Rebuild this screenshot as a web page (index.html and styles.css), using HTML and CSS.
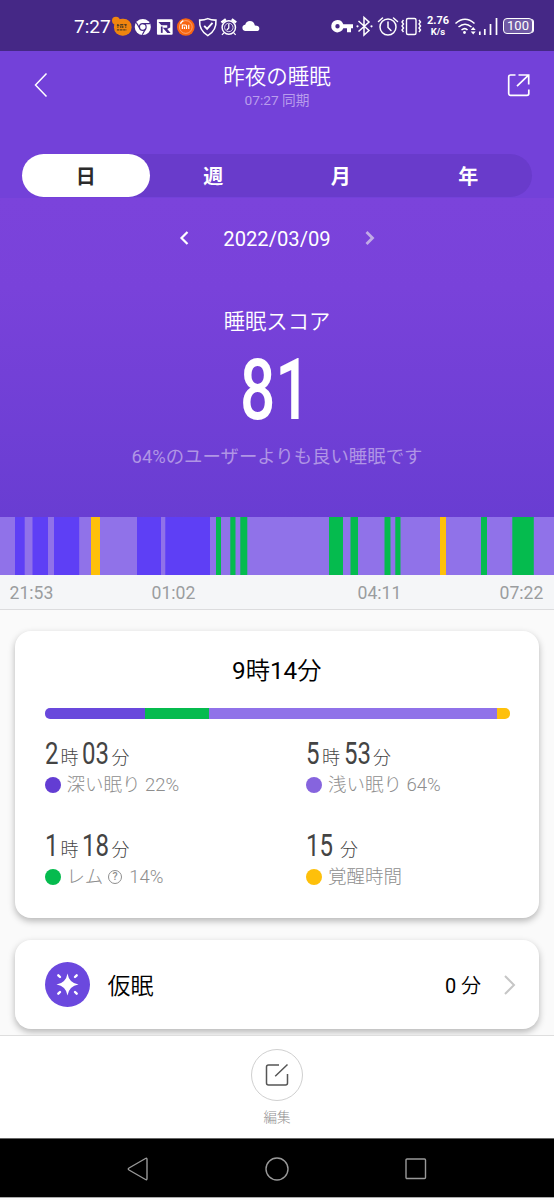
FILE: index.html
```html
<!DOCTYPE html>
<html lang="ja">
<head>
<meta charset="utf-8">
<title>昨夜の睡眠</title>
<link rel="stylesheet" href="styles.css">
</head>
<body>
<div class="phone">
  <div class="status">
    <span class="clock">7:27</span>
    <div class="notifs">
      <svg viewBox="0 0 22 24"><circle cx="5" cy="6.500" r="4" fill="#f0850f"/><rect x="3" y="4.500" width="18" height="17.500" rx="8.500" fill="#f0850f"/><path d="M6 11.500h3M7 10v4M10 10.500h2v3h-2zM13.500 10.500h3M15 10v4M6 16h10" stroke="#59401f" stroke-width="1.300" fill="none" stroke-dasharray="2.500 .7"/></svg>
      <svg viewBox="0 0 22 24"><circle cx="11" cy="13" r="8.200" fill="#fff"/><circle cx="11" cy="13" r="3.400" fill="#fff" stroke="#452886" stroke-width="1.200"/><path d="M11 9.600h7.300M8.100 14.700L4.300 8.500M13.900 14.700L10.500 21" stroke="#452886" stroke-width="1.200"/></svg>
      <svg viewBox="0 0 22 24"><rect x="3" y="5" width="16" height="16" rx="1" fill="#fff"/><path d="M4.500 7.800h12v5.800l-3 1.400 3.500 4.200h-3.400l-4.600-5.400h4.500v-2.600H7.500z" fill="#452886"/><path d="M7 12.500h1.800V19H7z" fill="#452886"/></svg>
      <svg viewBox="0 0 22 24"><circle cx="11" cy="13" r="9" fill="#f86510"/><circle cx="11" cy="13" r="6.500" fill="none" stroke="#ffb38a" stroke-width=".8"/><path d="M5.500 9.500a7 7 0 0 1 3-3" stroke="#fff" stroke-width="1.600" fill="none"/><path d="M7.500 15v-4h3.200q1 0 1 1v3M9.600 12.800V15M14 10.800V15" stroke="#fff" stroke-width="1.200" fill="none"/></svg>
      <svg viewBox="0 0 22 24"><path d="M11 4.500q4 1.700 8.300 1.500.8 10.500-8.300 15.800Q1.900 16.500 2.700 6 7 6.200 11 4.500z" fill="none" stroke="#fff" stroke-width="1.600"/><path d="M7.300 11.800l3 3.200 5.500-6.200" fill="none" stroke="#fff" stroke-width="1.900"/></svg>
      <svg viewBox="0 0 22 24"><g fill="none" stroke="#fff"><circle cx="11" cy="13.500" r="6.800" stroke-width="1.500"/><circle cx="11" cy="13.500" r="4.300" stroke-width=".8"/><path d="M11 10v4l-2 2M6 19l-2 2M16 19l2 2" stroke-width="1.300"/><path d="M3.500 8.500L8 5.200M14 5.200l4.500 3.300" stroke-width="2.600"/></g></svg>
      <svg viewBox="0 0 22 24"><path d="M5 17.200a3.300 3.300 0 0 1 .3-6.500Q6.500 7 10 7q4 0 5.200 4.500 4.500.1 4.500 3 0 2.700-3 2.700z" fill="#fff"/></svg>
    </div>
    <div class="system">
      <svg width="24" height="24" viewBox="330 13 24 24"><path fill="#fff" fill-rule="evenodd" d="M337.500 19a6.200 6.200 0 0 1 5.800 4.200H353v4h-2v4h-4v-4h-3.700a6.200 6.200 0 1 1-5.800-8.200zm0 4a2.200 2.200 0 1 0 0 4.400 2.200 2.200 0 0 0 0-4.400z"/></svg>
      <svg width="22" height="24" viewBox="354 13 22 24"><path d="M358.500 20l10.500 9.500-5 4.500V16.500l5 4.500-10.500 9.500" fill="none" stroke="#fff" stroke-width="1.500"/><circle cx="357.500" cy="25.300" r="1.100" fill="#fff"/><circle cx="371.500" cy="25.300" r="1.100" fill="#fff"/></svg>
      <svg width="24" height="24" viewBox="376 13 24 24"><g fill="none" stroke="#fff" stroke-width="1.500"><circle cx="388" cy="26" r="8"/><path d="M388 21v5.500l3 3M378.500 20.500l4-3.500M397.500 20.500l-4-3.500" stroke-linecap="round"/></g></svg>
      <svg width="24" height="24" viewBox="400 13 24 24"><g fill="none" stroke="#fff" stroke-width="1.400"><rect x="406.500" y="17.500" width="9.500" height="16" rx="1.500"/><path d="M403.500 19l-1.500 2 1.500 2-1.500 2 1.500 2-1.500 2 1.500 2M419 19l1.500 2-1.500 2 1.500 2-1.500 2 1.500 2-1.500 2"/></g></svg>
      <div class="speed"><b>2.76</b><b class="unit">K/s</b></div>
      <svg width="24" height="24" viewBox="454 13 24 24"><g fill="none" stroke="#fff" stroke-width="1.500"><path d="M455.500 22.500q9.500-8.500 19 0M458.500 26q6.500-5.500 13 0M461.500 29q3.500-2.800 6 0"/></g><circle cx="464.500" cy="31.500" r="1.400" fill="#fff"/><path d="M470.700 29h5l-2.500-3zM470.700 30.500h5l-2.500 3z" fill="#fff"/></svg>
      <svg width="22" height="24" viewBox="478 13 22 24"><path d="M479.800 30.500V34M484.800 28v6M490.500 23v11M496.500 17v17" stroke="#fff" stroke-width="1.700"/></svg>
      <div class="battery">100</div>
    </div>
  </div>

  <div class="hero">
    <div class="hero-top">
      <header class="titlebar">
        <svg width="40" height="40" viewBox="20 65 40 40"><path d="M46.500 73.500L35.500 85l11 11.500" fill="none" stroke="#fff" stroke-width="1.500"/></svg>
        <div class="titles"><h1>昨夜の睡眠</h1><p>07:27 同期</p></div>
        <svg width="40" height="40" viewBox="498 65 40 40"><path d="M515.500 75h-5q-1.800 0-1.800 1.800v16.700q0 1.800 1.800 1.800h16.500q1.800 0 1.800-1.800v-4M518.500 75h10.200v9.500M528.500 75.200l-11.500 11" fill="none" stroke="#fff" stroke-width="1.700"/></svg>
      </header>
      <nav class="tabs"><span class="on">日</span><span>週</span><span>月</span><span>年</span></nav>
    </div>
    <div class="hero-main">
      <div class="date">
        <svg width="14" height="20" viewBox="0 0 14 20"><path d="M10.500 4L4.500 10l6 6" fill="none" stroke="#fff" stroke-width="2.200"/></svg>
        <span>2022/03/09</span>
        <svg width="14" height="20" viewBox="0 0 14 20"><path d="M3.500 4l6 6-6 6" fill="none" stroke="#c2abe6" stroke-width="2.800"/></svg>
      </div>
      <h2>睡眠スコア</h2>
      <div class="score"><span>81</span></div>
      <p class="compare">64%のユーザーよりも良い睡眠です</p>
    </div>
  </div>

  <svg class="stages" width="554" height="58" viewBox="0 0 554 58">
    <rect width="554" height="58" fill="#9072e9"/>
    <path fill="#5e3ff5" d="M15 0h9.700v58H15zM32.500 0H48v58H32.500zM54 0h25.200v58H54zM137 0h24v58h-24zM165.300 0H210v58h-44.700z"/>
    <path fill="#fec00a" d="M91 0h9v58h-9zM440 0h6v58h-6z"/>
    <path fill="#05bb4e" d="M216 0h5v58h-5zM230.300 0h5.200v58h-5.200zM240.300 0h7v58h-7zM329 0h14v58h-14zM350.500 0h7.500v58h-7.500zM384.500 0h6v58h-6zM395.300 0h5.200v58h-5.200zM481 0h6v58h-6zM512.300 0h21.500v58h-21.500z"/>
  </svg>
  <div class="times"><span>21:53</span><span>01:02</span><span>04:11</span><span>07:22</span></div>

  <main class="content">
    <section class="card summary">
      <h3><span class="num">9</span>時<span class="num">14</span>分</h3>
      <div class="ratio"><i class="deep"></i><i class="rem"></i><i class="light"></i><i class="awake"></i></div>
      <div class="grid">
        <div><div class="dur"><b>2</b><span>時</span><b>03</b><span>分</span></div><div class="legend"><i class="dot c-deep"></i>深い眠り 22%</div></div>
        <div><div class="dur"><b>5</b><span>時</span><b>53</b><span>分</span></div><div class="legend"><i class="dot c-light"></i>浅い眠り 64%</div></div>
        <div><div class="dur"><b>1</b><span>時</span><b>18</b><span>分</span></div><div class="legend"><i class="dot c-rem"></i>レム<span class="help">?</span>14%</div></div>
        <div><div class="dur"><b>15</b><span class="wide">分</span></div><div class="legend"><i class="dot c-awake"></i>覚醒時間</div></div>
      </div>
    </section>
    <section class="card nap">
      <svg width="45" height="45" viewBox="0 0 45 45"><circle cx="22.500" cy="22.500" r="22.500" fill="#6b48de"/><path d="M22.500 11.500q1.500 9.500 11 11-9.500 1.500-11 11-1.500-9.500-11-11 9.500-1.500 11-11z" fill="#fff"/><path d="M13.300 13.300l1.700 1.700M31.700 13.300L30 15M13.300 31.700L15 30M31.700 31.700L30 30" stroke="#fff" stroke-width="2.400" stroke-linecap="round"/></svg>
      <span class="nap-name">仮眠</span>
      <span class="nap-value"><span class="num">0</span> 分</span>
      <svg width="14" height="24" viewBox="0 0 14 24"><path d="M2 3l9 9-9 9" fill="none" stroke="#c6c6c6" stroke-width="2"/></svg>
    </section>
  </main>

  <footer class="edit">
    <div class="edit-btn"><svg width="26" height="26" viewBox="0 0 26 26"><path d="M15 3H4.500Q2.500 3 2.500 5v16q0 2 2 2h17q2 0 2-2V12M11.200 14.200L23.500 2.500" fill="none" stroke="#555" stroke-width="1.500"/></svg></div>
    <span>編集</span>
  </footer>
  <div class="navbar">
    <svg width="24" height="26" viewBox="0 0 24 26"><path d="M19.500 2.500q1.500-.8 1.500 1v19q0 1.800-1.500 1L3 14q-1.500-1 0-2z" fill="none" stroke="#999" stroke-width="1.400"/></svg>
    <svg width="24" height="26" viewBox="0 0 24 26"><circle cx="12" cy="13" r="11" fill="none" stroke="#999" stroke-width="1.400"/></svg>
    <svg width="24" height="26" viewBox="0 0 24 26"><rect x="2" y="3" width="19.500" height="19.500" rx="1" fill="none" stroke="#999" stroke-width="1.400"/></svg>
  </div>
</div>
</body>
</html>
```
FILE: styles.css
```css
* { box-sizing: border-box; }
body, h1, h2, h3, p { margin: 0; font-weight: 400; }
body { font-family: Roboto, "Noto Sans CJK JP", sans-serif; background: #fafafa; }
svg { display: block; flex: none; }
.phone { width: 554px; height: 1200px; overflow: hidden; display: flex; flex-direction: column; }
.phone > * { flex: none; }
.num { font-weight: 400; }

.status { height: 51px; background: #452886; color: #fff; display: flex; align-items: center; padding-left: 74px; }
.clock { width: 36.500px; font-size: 19px; line-height: 24px; margin-top: 2px; white-space: nowrap; }
.notifs { display: flex; width: 151px; }
.notifs svg { width: 21.600px; height: 24px; }
.system { display: flex; align-items: center; margin-left: auto; width: 224px; }
.speed { width: 30px; display: flex; flex-direction: column; align-items: center; font-size: 11px; line-height: 11px; padding-right: 2px; }
.speed .unit { font-size: 9.500px; }
.battery { margin-left: 3px; width: 30px; height: 16px; border: 1.500px solid #fff; border-radius: 4px; background: #705aa4; box-shadow: 2px 0 0 -1px #fff; font-size: 13px; line-height: 14px; text-align: center; }

.hero { height: 466px; color: #fff; text-align: center; }
.hero h1, .hero h2, .summary h3, .nap { font-weight: 350; }
.hero-top { height: 147px; background: #7341d9; }
.titlebar { height: 103px; display: flex; justify-content: space-between; padding: 14px 16px 0 20px; }
.titles { margin: -5px 4px 0 0; }
.titles h1 { font-size: 21.500px; line-height: 34px; }
.titles p { font-size: 13.700px; line-height: 18px; margin-top: -3px; color: #b99dec; }
.tabs { height: 43px; margin: 0 22px; border-radius: 22px; background: #693bcb; display: grid; grid-template-columns: repeat(4, 1fr); font-size: 20px; font-weight: 700; line-height: 47px; }
.tabs .on { background: #fff; color: #2b2b2b; border-radius: 22px; height: 43px; }
.hero-main { height: 319px; background: linear-gradient(#7b43db, #7942da 28%, #693dd2); padding-top: 28px; }
.date { height: 24px; display: flex; justify-content: center; align-items: center; font-size: 20.200px; gap: 32px; }
.date span { padding-top: 1px; }
.hero-main h2 { margin-top: 55px; font-size: 21.300px; line-height: 34px; }
.score { height: 82px; margin-top: 10px; font-size: 85px; line-height: 82px; font-weight: 500; }
.score span { display: inline-block; transform: scaleX(.73); margin-left: -3px; }
.compare { margin-top: 12px; font-size: 18.400px; line-height: 28px; color: #b095e5; }

.times { height: 35px; background: #f5f6f8; border-bottom: 1px solid #dcdcde; display: grid; grid-template-columns: 142px 206px 142px 44px; padding-left: 9.500px; font-size: 17.600px; line-height: 36px; color: #9b9d9f; }
.content { height: 425px; padding: 21px 15px 0; overflow: hidden; background: #fafafa; }
.card { background: #fff; border-radius: 16px; box-shadow: 0 3px 7px rgba(0,0,0,.28); }
.summary { height: 287px; padding: 20px 30px 0 29.500px; }
.summary h3 { text-align: center; font-size: 24.300px; line-height: 40px; }
.ratio { height: 11px; margin-top: 17px; display: grid; grid-template-columns: 100.500px 64px 288px 12.500px; border-radius: 5px; overflow: hidden; width: 465px; }
.deep { background: #6948dc; } .rem { background: #05bb4e; } .light { background: #9072e9; } .awake { background: #fec00a; }
.grid { display: grid; grid-template-columns: 261.500px 1fr; grid-template-rows: 92px 92px; margin-top: 17px; }
.dur { height: 34px; display: flex; align-items: baseline; color: #444; }
.dur b { display: inline-block; font-size: 32px; line-height: 35px; font-weight: 400; transform: scaleX(.75); transform-origin: left; margin-right: -5px; }
.dur b:nth-of-type(2), .dur b:only-of-type { margin-right: -10px; }
.dur span { font-size: 18px; line-height: 20px; margin: 0 4px 0 3px; font-weight: 300; }
.dur .wide { margin-left: 8px; }
.legend { height: 30px; display: flex; align-items: center; font-size: 18.500px; line-height: 30px; color: #8e8e8e; font-weight: 300; white-space: pre; }
.dot { width: 16px; height: 16px; border-radius: 50%; margin-right: 6px; flex: none; margin-top: -1px; }
.c-deep { background: #633dd3; } .c-light { background: #8664de; } .c-rem { background: #05bb4e; } .c-awake { background: #fec00a; }
.help { width: 14px; height: 14px; border: 1px solid #8e8e8e; border-radius: 50%; font-size: 10.500px; line-height: 12px; text-align: center; margin: 0 7px 0 5px; font-weight: 500; }
.nap { height: 89px; margin-top: 22px; padding: 0 22px 0 29.500px; display: flex; align-items: center; }
.nap-name { margin-left: 18px; font-size: 23px; margin-top: -2px; }
.nap-value { margin-left: auto; margin-right: 22px; font-size: 20px; }

.edit { height: 103px; background: #fff; border-top: 1px solid #dedede; display: flex; flex-direction: column; align-items: center; padding-top: 13px; }
.edit-btn { width: 52px; height: 52px; border: 1px solid #d0d0d0; border-radius: 50%; display: grid; place-items: center; }
.edit span { font-size: 13.500px; line-height: 20px; margin-top: 6px; color: #8e8e8e; font-weight: 300; }
.navbar { height: 60px; background: #000; border-top: 1px solid #666; border-bottom: 1px solid #aaa; display: flex; justify-content: center; align-items: center; gap: 115px; padding-top: 2px; }
```
